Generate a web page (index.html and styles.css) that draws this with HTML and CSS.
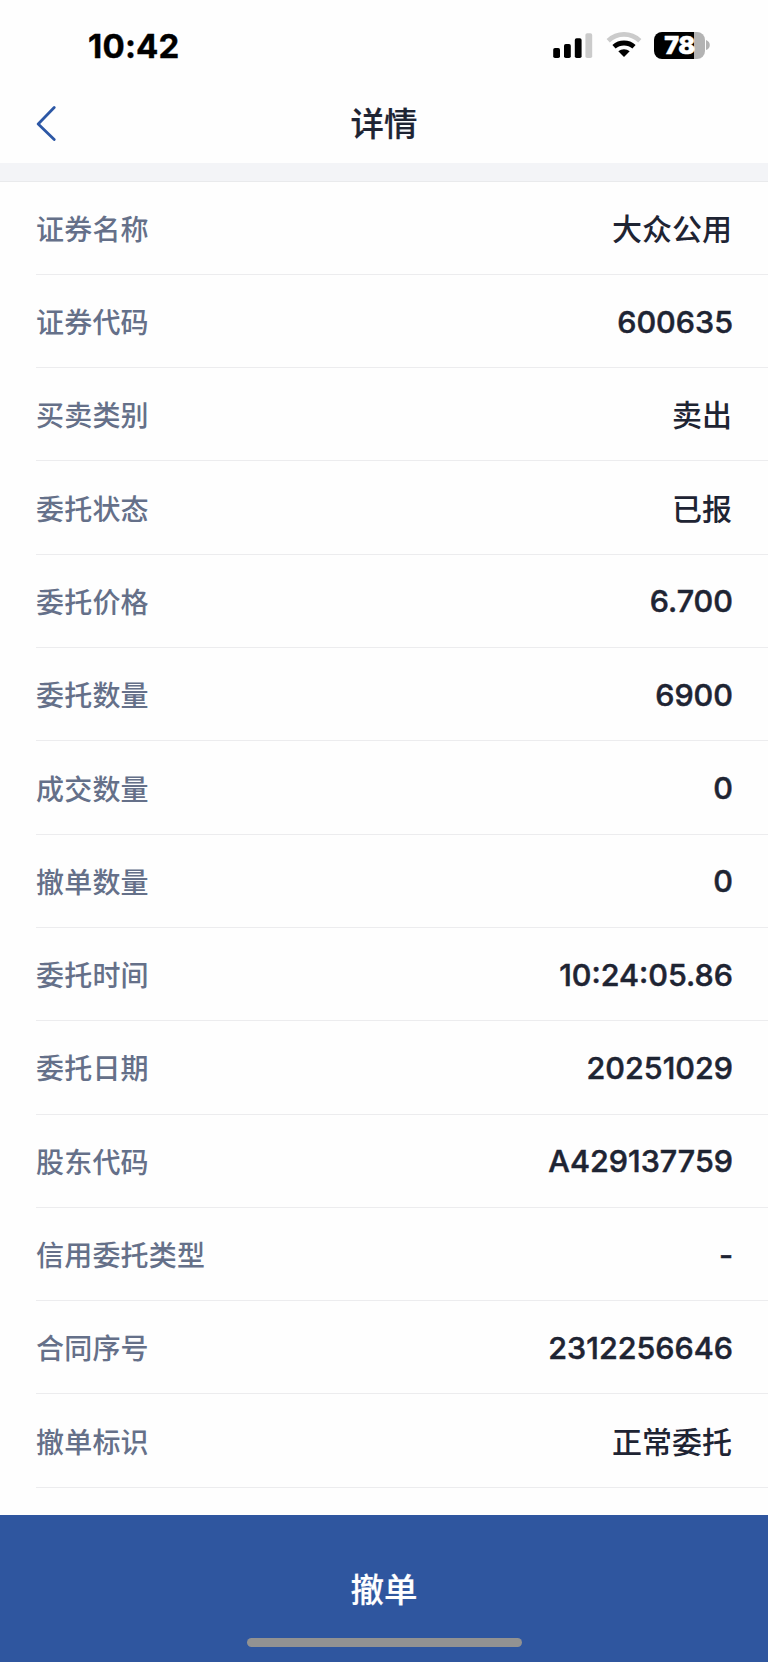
FILE: index.html
```html
<!DOCTYPE html>
<html lang="zh-CN">
<head>
  <meta charset="UTF-8">
  <title>详情</title>
  <link rel="stylesheet" href="styles.css">
</head>
<body>

<div class="status-bar">
  <span class="time">10:42</span>
  <div class="status-icons">
    <svg class="signal" width="40" height="26" viewBox="0 0 40 26">
      <rect x="0.2" y="15" width="6.8" height="10" rx="1.8"/>
      <rect x="11" y="11" width="6.8" height="14" rx="1.8"/>
      <rect x="21.8" y="5.2" width="6.8" height="19.8" rx="1.8"/>
      <rect x="32.4" y="0.2" width="6.8" height="24.8" rx="1.8" fill="#cbcbcb"/>
    </svg>
    <svg class="wifi" width="36" height="26" viewBox="0 0 36 26">
      <path d="M2.2 8.7C11.2 .3 24.8 .3 33.8 8.7" fill="none" stroke="#cbcbcb" stroke-width="4.6"/>
      <path d="M8 14.8C13.7 9.7 22.3 9.7 28 14.8" fill="none" stroke="#000" stroke-width="4.8"/>
      <path d="M12.3 19.3C15.6 16.4 20.4 16.4 23.7 19.3L18 25Z"/>
    </svg>
    <div class="battery"><span>78</span></div>
    <svg class="battery-cap" width="4" height="10" viewBox="0 0 4 10">
      <path d="M0 0Q3.8 1.5 3.8 5T0 10Z" fill="#b3b3b3"/>
    </svg>
  </div>
</div>

<div class="header">
  <a href="#" class="back-button">
    <svg width="22" height="36" viewBox="0 0 22 36">
      <path d="M18.2 1.6L2.2 18L18.2 33.6" fill="none" stroke="#2c57a5" stroke-width="2.8" stroke-linecap="round" stroke-linejoin="round"/>
    </svg>
  </a>
  <h1>详情</h1>
</div>

<div class="details">
  <div class="row"><span class="label">证券名称</span><span class="value">大众公用</span></div>
  <div class="row"><span class="label">证券代码</span><span class="value number">600635</span></div>
  <div class="row"><span class="label">买卖类别</span><span class="value">卖出</span></div>
  <div class="row"><span class="label">委托状态</span><span class="value">已报</span></div>
  <div class="row"><span class="label">委托价格</span><span class="value number">6.700</span></div>
  <div class="row"><span class="label">委托数量</span><span class="value number">6900</span></div>
  <div class="row"><span class="label">成交数量</span><span class="value number">0</span></div>
  <div class="row"><span class="label">撤单数量</span><span class="value number">0</span></div>
  <div class="row"><span class="label">委托时间</span><span class="value number">10:24:05.86</span></div>
  <div class="row"><span class="label">委托日期</span><span class="value number">20251029</span></div>
  <div class="row"><span class="label">股东代码</span><span class="value number">A429137759</span></div>
  <div class="row"><span class="label">信用委托类型</span><span class="value number">-</span></div>
  <div class="row"><span class="label">合同序号</span><span class="value number">2312256646</span></div>
  <div class="row"><span class="label">撤单标识</span><span class="value">正常委托</span></div>
</div>

<button class="cancel-button">
  <span>撤单</span>
  <i class="home-bar"></i>
</button>

</body>
</html>
```

FILE: styles.css
```css
* {
  box-sizing: border-box;
}

body {
  display: flex;
  flex-direction: column;
  height: 1662px;
  margin: 0;
  background-color: #fefefe;
  color: #1e2433;
  font-family: Inter, "Noto Sans CJK SC", sans-serif;
}

.status-bar {
  display: flex;
  justify-content: space-between;
  height: 86px;
  padding: 32px 58px 0 88px;
  color: black;
}

.time {
  font-size: 33px;
  font-weight: 700;
  line-height: 29px;
  letter-spacing: 0.2px;
  -webkit-text-stroke: 0.4px;
}

.status-icons {
  display: flex;
}

.signal {
  margin: 1px 13px 0 0;
}

.wifi {
  margin-right: 12px;
}

.battery {
  width: 51px;
  height: 27px;
  border-radius: 8px;
  background: linear-gradient(to right, black 40px, #b3b3b3 40px);
  color: white;
  font-size: 25px;
  font-weight: 900;
  line-height: 27px;
  letter-spacing: -0.5px;
  text-align: center;
  -webkit-text-stroke: 0.4px;
}

.battery-cap {
  margin: 8px 0 0 1px;
}

.header {
  display: grid;
  grid-template-columns: 1fr auto 1fr;
  align-items: center;
  height: 77px;
  padding: 0 36px 2px;
}

.back-button {
  height: 36px;
}

h1 {
  margin: 0;
  font-size: 33.5px;
  font-weight: 500;
  line-height: 48px;
  -webkit-text-stroke: 0.2px;
}

.details {
  flex: 1;
  padding: 0.6px 0 0 36px;
  border-top: 18px solid #f3f4f7;
  box-shadow: inset 0 1px #e9eaec;
}

.row {
  display: flex;
  justify-content: space-between;
  align-items: center;
  height: 93.3px;
  padding: 0 36px 0 0;
  border-bottom: 1px solid #ececee;
}

.label {
  color: #657089;
  font-size: 28px;
  font-weight: 500;
  letter-spacing: 0.2px;
}

.value {
  padding-bottom: 2px;
  font-size: 30px;
  font-weight: 500;
}

.number {
  padding-bottom: 0;
  margin-right: -1px;
  font-size: 30.5px;
  -webkit-text-stroke: 0.5px;
}

.cancel-button {
  display: flex;
  flex-direction: column;
  justify-content: space-between;
  align-items: center;
  height: 147px;
  padding: 51px 0 15px;
  border: none;
  background-color: #2f569f;
  color: white;
  font: inherit;
  font-size: 33.5px;
  font-weight: 500;
  line-height: 48px;
  -webkit-text-stroke: 0.2px;
}

.home-bar {
  width: 275px;
  height: 9px;
  border-radius: 5px;
  background-color: #929292;
}
```
